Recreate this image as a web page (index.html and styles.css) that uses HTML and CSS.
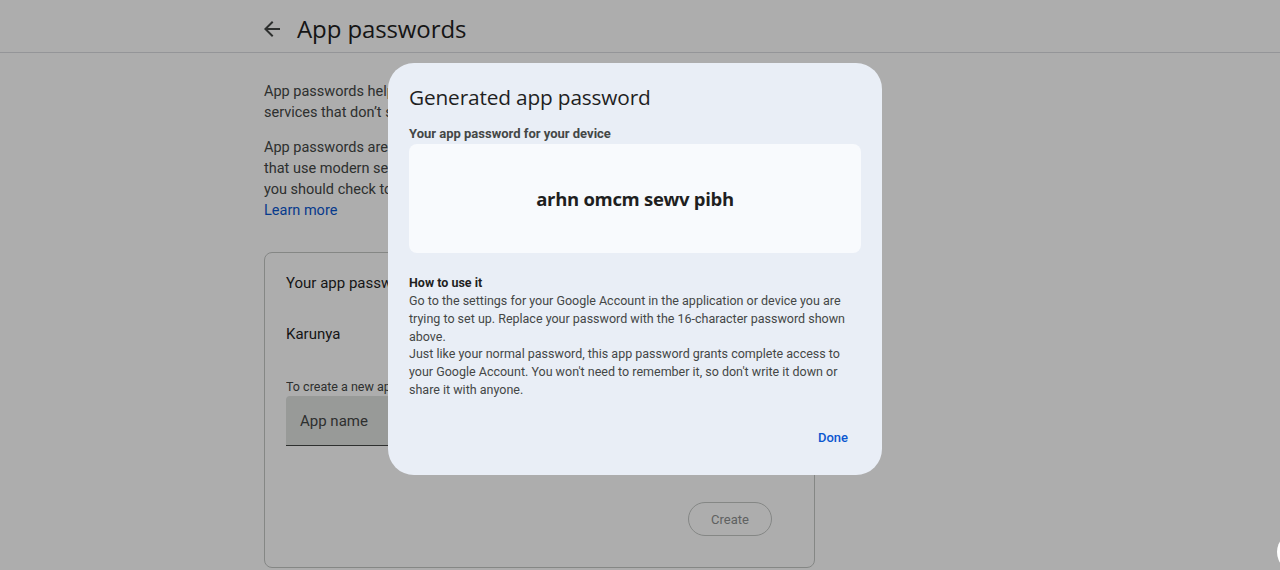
FILE: index.html
```html
<!DOCTYPE html>
<html lang="en">
<head>
<meta charset="utf-8">
<title>App passwords</title>
<link rel="stylesheet" href="styles.css">
</head>
<body>
<header class="topbar">
  <div class="topbar-inner">
    <svg class="back" width="24" height="24" viewBox="0 0 24 24" aria-hidden="true"><path d="M20 11H7.83l5.59-5.59L12 4l-8 8 8 8 1.41-1.41L7.83 13H20v-2z" fill="#444746"/></svg>
    <h1 class="page-title">App passwords</h1>
  </div>
</header>
<main class="content">
  <p class="para">App passwords help you sign into your Google Account on older apps and<br>services that don’t support modern security standards.</p>
  <p class="para">App passwords are less secure than using up-to-date apps and services<br>that use modern security standards. Before you create an app password,<br>you should check to see if your app needs this in order to sign in.<br><a class="link" href="#">Learn more</a></p>
  <section class="card">
    <h2 class="card-title">Your app passwords</h2>
    <div class="app-row">Karunya</div>
    <div class="hint">To create a new app specific password, type a name for it below…</div>
    <div class="field"><span class="field-label">App name</span></div>
    <div class="card-actions"><button class="create">Create</button></div>
  </section>
</main>
<div class="scrim"></div>
<div class="fab"></div>
<div class="dialog" role="dialog">
  <h2 class="dlg-title">Generated app password</h2>
  <div class="dlg-sub">Your app password for your device</div>
  <div class="pw-box"><span class="pw">arhn omcm sewv pibh</span></div>
  <div class="dlg-h">How to use it</div>
  <p class="dlg-body">Go to the settings for your Google Account in the application or device you are trying to set up. Replace your password with the 16-character password shown above.<br>Just like your normal password, this app password grants complete access to your Google Account. You won't need to remember it, so don't write it down or share it with anyone.</p>
  <div class="dlg-actions"><button class="done">Done</button></div>
</div>
</body>
</html>
```
FILE: styles.css
```css
* { box-sizing: border-box; }
html, body { margin: 0; padding: 0; }
body {
  background: #ffffff;
  font-family: Roboto, "Liberation Sans", Arial, sans-serif;
  color: #1f1f1f;
  width: 1280px;
  height: 570px;
  overflow: hidden;
  position: relative;
}
.topbar {
  height: 53px;
  border-bottom: 1px solid #dadce0;
}
.topbar-inner {
  display: flex;
  align-items: center;
  height: 52px;
  padding-left: 260px;
  padding-top: 5px;
}
.back { width: 24px; height: 24px; }
.page-title {
  margin: 0 0 0 13px;
  font-family: "Open Sans", Roboto, sans-serif;
  font-weight: 400;
  font-size: 24px;
  letter-spacing: -0.1px;
  color: #1f1f1f;
}
.content {
  width: 551px;
  margin-left: 264px;
  padding-top: 28px;
}
.para {
  margin: 0 0 14px 0;
  font-size: 14.5px;
  line-height: 21px;
  color: #444746;
  white-space: nowrap;
}
.link { color: #0b57d0; text-decoration: none; }
.card {
  margin-top: 31px;
  height: 316px;
  border: 1px solid #c4c7c5;
  border-radius: 8px;
  padding: 18px 42px 0 21px;
  display: flex;
  flex-direction: column;
}
.card-title {
  margin: 0;
  font-size: 15px;
  font-weight: 400;
  line-height: 24px;
  color: #1f1f1f;
}
.app-row {
  margin-top: 27px;
  font-size: 15px;
  line-height: 24px;
}
.hint {
  margin-top: 33px;
  font-size: 12.5px;
  line-height: 16px;
  color: #444746;
  white-space: nowrap;
  overflow: hidden;
}
.field {
  margin-top: 1px;
  height: 50px;
  background: #e1e3e1;
  border-bottom: 1px solid #444746;
  border-radius: 4px 4px 0 0;
  display: flex;
  align-items: center;
  padding-left: 14px;
}
.field-label { font-size: 15px; color: #444746; }
.card-actions {
  margin-top: 56px;
  display: flex;
  justify-content: flex-end;
}
.create {
  width: 84px;
  height: 34px;
  border: 1px solid #c4c7c5;
  border-radius: 17px;
  background: transparent;
  font-family: Roboto, sans-serif;
  font-size: 13px;
  color: #8d8f8f;
}
.scrim {
  position: absolute;
  inset: 0;
  background: rgba(0, 0, 0, 0.32);
}
.fab {
  position: absolute;
  left: 1277px;
  top: 532px;
  width: 40px;
  height: 40px;
  border-radius: 50%;
  background: #ffffff;
}
.dialog {
  position: absolute;
  left: 388px;
  top: 63px;
  width: 494px;
  height: 412px;
  background: #e9eef6;
  border-radius: 26px;
  padding: 19px 21px 18px 21px;
  display: flex;
  flex-direction: column;
}
.dlg-title {
  margin: 0;
  font-family: "Open Sans", Roboto, sans-serif;
  font-weight: 400;
  font-size: 20.8px;
  line-height: 30px;
  letter-spacing: -0.15px;
  color: #1f1f1f;
}
.dlg-sub {
  margin-top: 12px;
  font-size: 13px;
  font-weight: 700;
  line-height: 20px;
  color: #444746;
}
.pw-box {
  height: 109px;
  background: #f8fafd;
  border-radius: 8px;
  display: flex;
  align-items: center;
  justify-content: center;
}
.pw {
  font-family: "Open Sans", Roboto, sans-serif;
  font-size: 18.5px;
  font-weight: 700;
  letter-spacing: -0.3px;
  color: #1f1f1f;
}
.dlg-h {
  margin-top: 21px;
  font-size: 12.5px;
  font-weight: 700;
  line-height: 18px;
  color: #1f1f1f;
}
.dlg-body {
  margin: 0;
  font-size: 12.5px;
  line-height: 17.75px;
  color: #444746;
}
.dlg-actions {
  margin-top: auto;
  display: flex;
  justify-content: flex-end;
}
.done {
  height: 40px;
  padding: 0 13px;
  background: transparent;
  border: none;
  border-radius: 20px;
  font-family: Roboto, sans-serif;
  font-size: 13px;
  font-weight: 500;
  color: #0b57d0;
}
```
